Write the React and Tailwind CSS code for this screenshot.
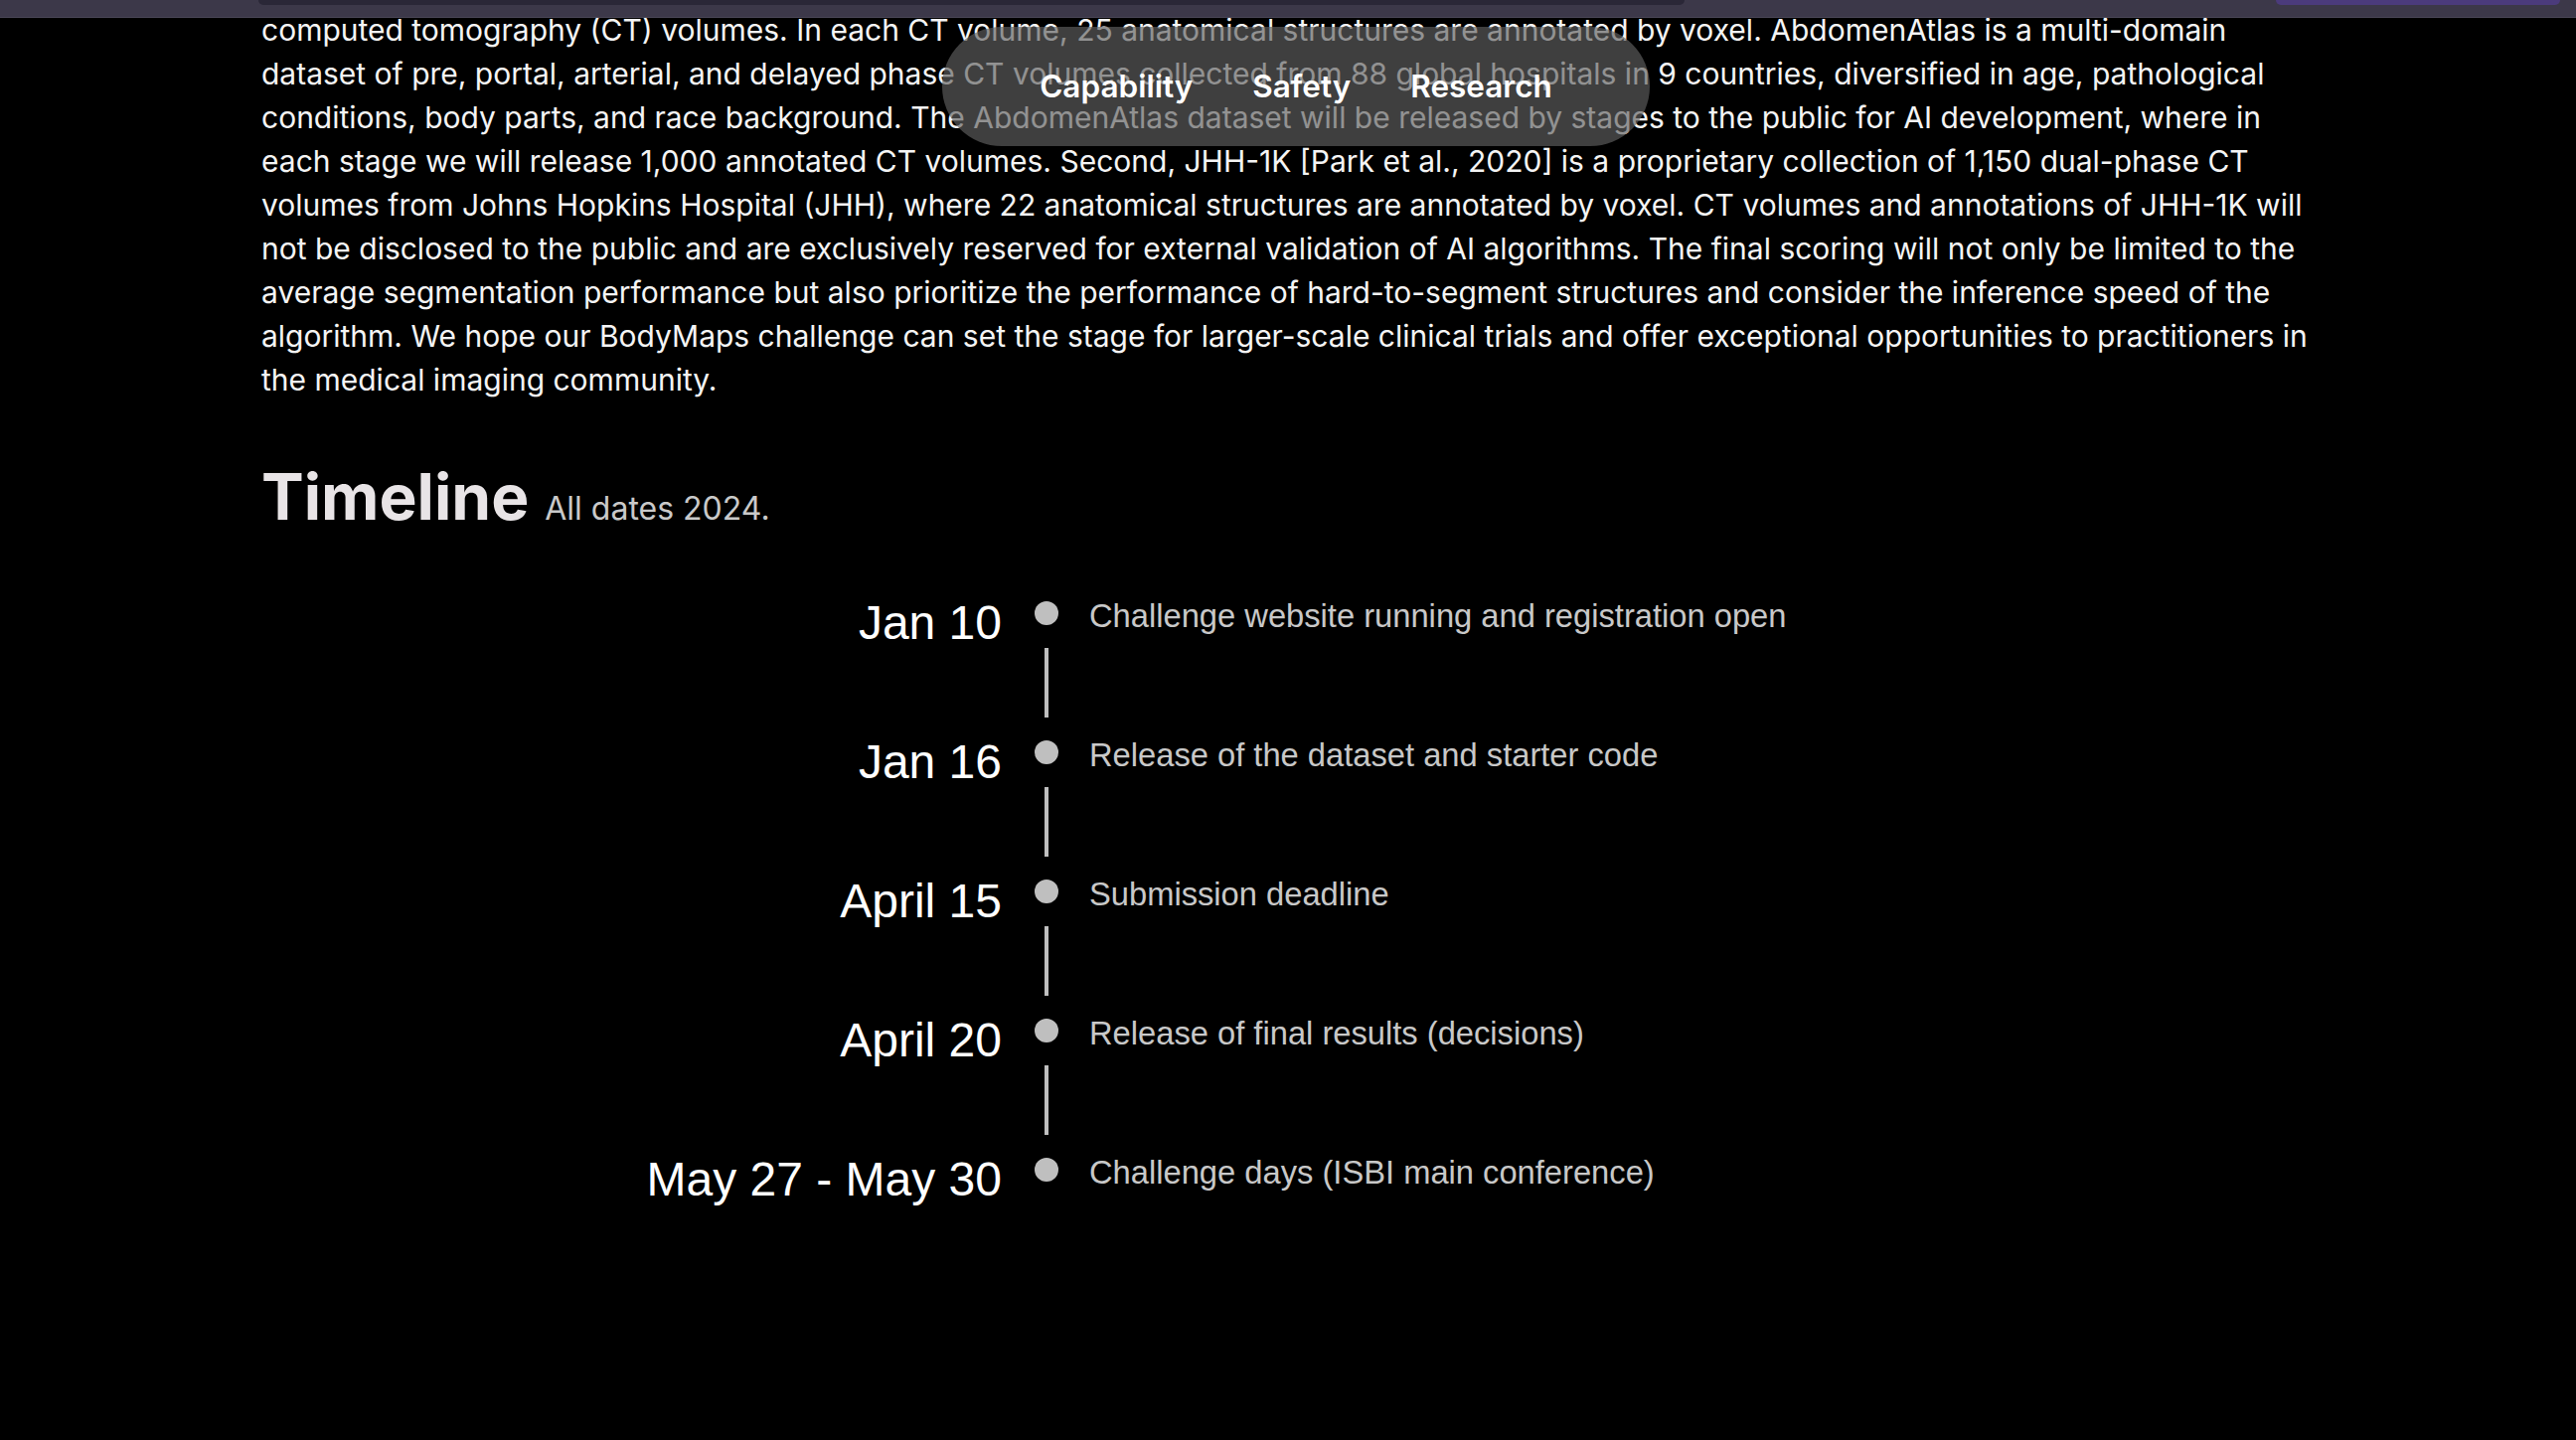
import React from "react";

const lines = [
  "computed tomography (CT) volumes. In each CT volume, 25 anatomical structures are annotated by voxel. AbdomenAtlas is a multi-domain",
  "dataset of pre, portal, arterial, and delayed phase CT volumes collected from 88 global hospitals in 9 countries, diversified in age, pathological",
  "conditions, body parts, and race background. The AbdomenAtlas dataset will be released by stages to the public for AI development, where in",
  "each stage we will release 1,000 annotated CT volumes. Second, JHH-1K [Park et al., 2020] is a proprietary collection of 1,150 dual-phase CT",
  "volumes from Johns Hopkins Hospital (JHH), where 22 anatomical structures are annotated by voxel. CT volumes and annotations of JHH-1K will",
  "not be disclosed to the public and are exclusively reserved for external validation of AI algorithms. The final scoring will not only be limited to the",
  "average segmentation performance but also prioritize the performance of hard-to-segment structures and consider the inference speed of the",
  "algorithm. We hope our BodyMaps challenge can set the stage for larger-scale clinical trials and offer exceptional opportunities to practitioners in",
  "the medical imaging community.",
];

const events = [
  ["Jan 10", "Challenge website running and registration open"],
  ["Jan 16", "Release of the dataset and starter code"],
  ["April 15", "Submission deadline"],
  ["April 20", "Release of final results (decisions)"],
  ["May 27 - May 30", "Challenge days (ISBI main conference)"],
];

export default function App() {
  return (
    <div className="relative min-h-[1449px] w-full overflow-hidden bg-black [font-family:Inter,sans-serif]">
      {/* top window strip */}
      <div className="absolute left-0 top-0 z-20 flex h-[18px] w-full items-start border-b border-[#4a4657] bg-[#3c3849]">
        <div className="ml-[260px] h-[5px] w-[1435px] rounded-b-[8px] bg-[#2a2737]" />
        <div className="ml-auto mr-[16px] h-[5px] w-[286px] rounded-b-[8px] bg-[#4b3b7c]" />
      </div>

      {/* floating nav pill */}
      <div className="absolute left-[948px] top-[27px] z-10 flex h-[120px] w-[712px] items-center justify-center gap-[60px] rounded-full bg-[rgba(96,96,96,0.66)] text-[31.5px] font-semibold text-white">
        <span>Capability</span>
        <span>Safety</span>
        <span>Research</span>
      </div>

      <div className="mx-auto w-[2066px] pt-[8px]">
        <p className="whitespace-nowrap text-[30px] leading-[44px] text-[#f4f4f4]">
          {lines.map((l, i) => (
            <React.Fragment key={i}>
              {l}
              {i < lines.length - 1 && <br />}
            </React.Fragment>
          ))}
        </p>

        <div className="mt-[63px] flex h-[66px] items-baseline gap-[16px] leading-none">
          <h2 className="text-[64px] font-bold leading-[66px] text-[#e8e4e6]">Timeline</h2>
          <span className="text-[32px] leading-none text-[#c9c9c9]">All dates 2024.</span>
        </div>

        <div className="mt-[72px] flex flex-col [font-family:'Liberation_Sans',Arial,Helvetica,sans-serif]">
          {events.map(([date, desc], i) => (
            <div key={date} className="flex items-start">
              <div className="-mt-[2px] w-[745px] whitespace-nowrap text-right text-[48px] leading-[48px] text-white">
                {date}
              </div>
              <div className="ml-[33px] flex w-[24px] flex-col items-center">
                <div className="h-[24px] w-[24px] rounded-full bg-[#bfbfbf]" />
                {i < events.length - 1 && (
                  <div className="mb-[23px] mt-[23px] h-[70px] w-[4px] bg-[#bfbfbf]" />
                )}
              </div>
              <div className="-mt-[1px] ml-[31px] whitespace-nowrap text-[32.7px] leading-[32.7px] text-[#c8c8c8]">
                {desc}
              </div>
            </div>
          ))}
        </div>
      </div>
    </div>
  );
}
